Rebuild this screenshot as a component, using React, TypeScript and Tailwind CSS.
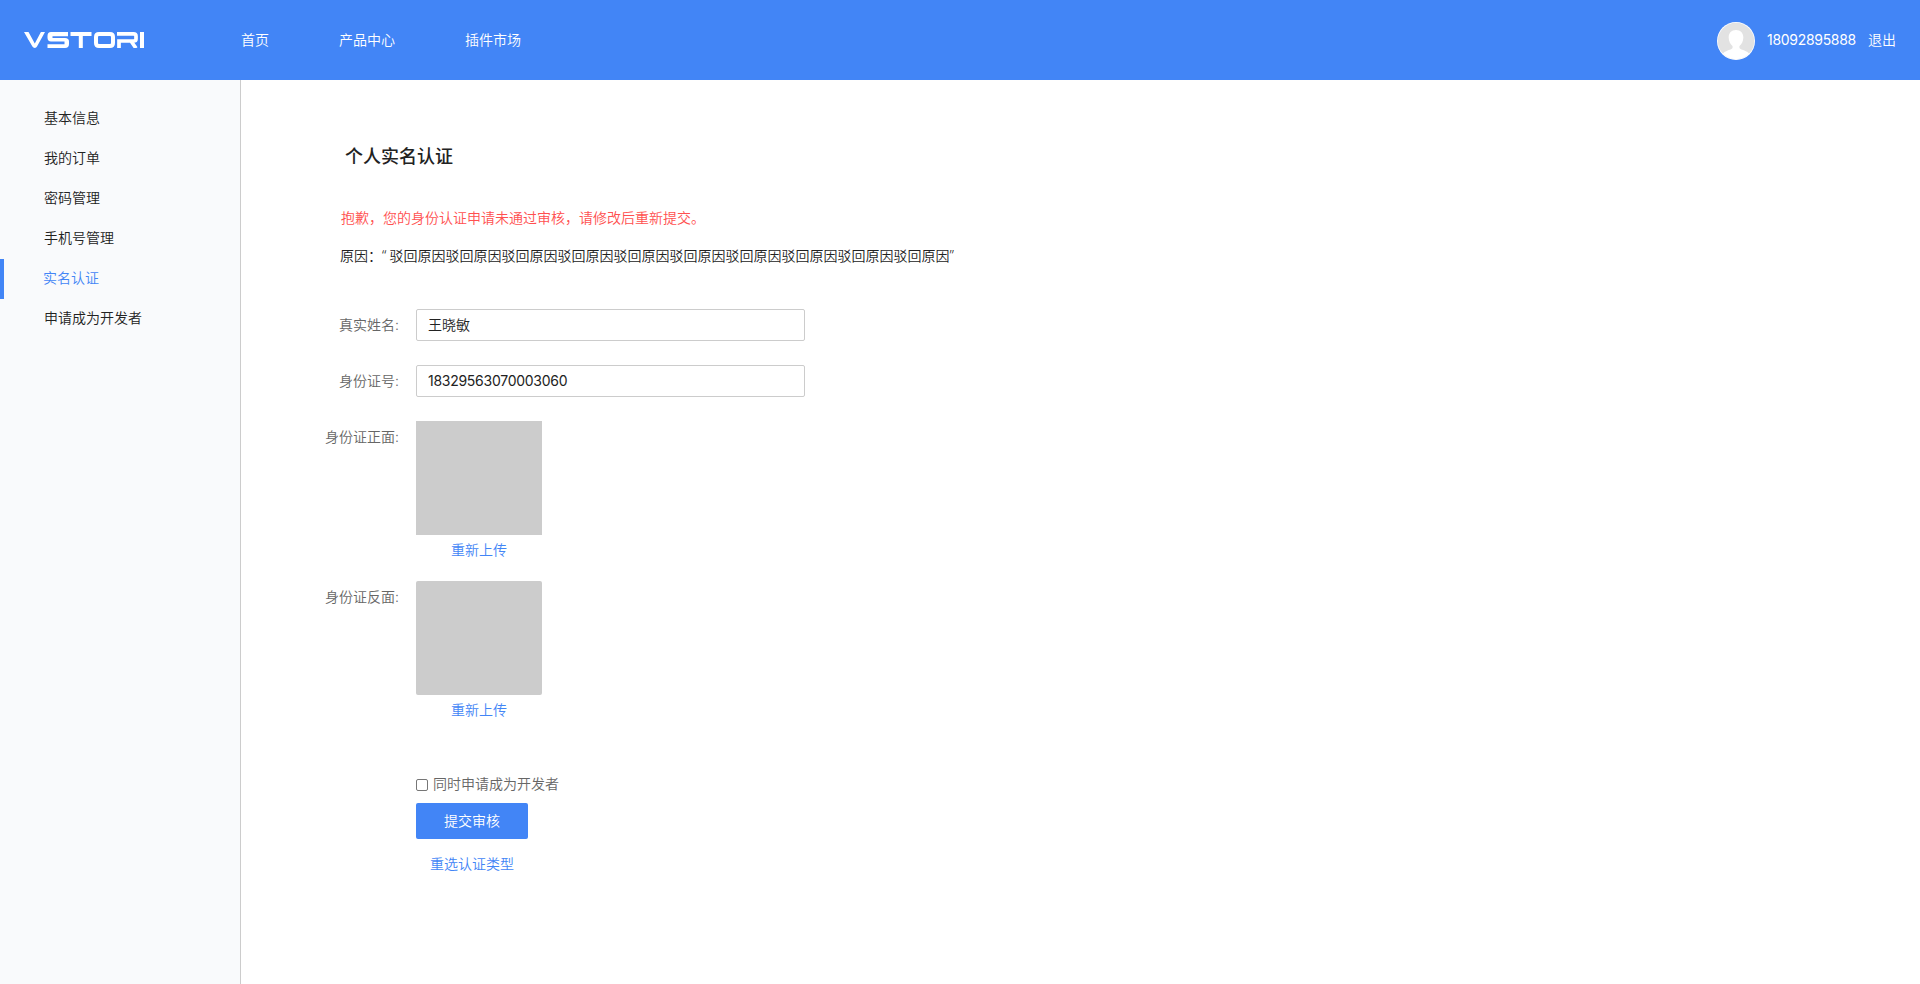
import React from 'react';

const navItems = ['首页', '产品中心', '插件市场'];
const menu = ['基本信息', '我的订单', '密码管理', '手机号管理', '实名认证', '申请成为开发者'];
const active = '实名认证';

function Logo() {
  return (
    <svg width="120" height="16" viewBox="0 0 120 16" fill="none" stroke="#fff" strokeWidth="4" aria-label="VSTORI">
      <path d="M0 0H4.500L10.800 11.500L16.900 0H21L13 14.6Q12.3 16 10.800 16Q9.200 16 8.4 14.6Z" fill="#fff" stroke="none" />
      <path
        d="M27 0H44V4.200H28.500V6H41Q45 6 45 9.500V12Q45 16 41 16H23.500V12.300H40.500V9.400H27Q23.500 9.400 23.500 5.800V4Q23.500 0 27 0Z"
        fill="#fff"
        stroke="none"
      />
      <path d="M46.500 2H67.500M56.800 2V16" />
      <path d="M75 2H86Q89 2 89 5V11Q89 14 86 14H75Q72 14 72 11V5Q72 2 75 2Z" />
      <path d="M93 1.900H109.500Q112 1.900 112 4V7Q112 9 109.500 9H95V16M107 9L112 16.200" strokeWidth="3.700" />
      <path d="M118 0V16" />
    </svg>
  );
}

function Avatar() {
  return (
    <svg className="mt-0.5 shrink-0" width="38" height="38" viewBox="0 0 38 38">
      <defs>
        <clipPath id="face">
          <circle cx="19" cy="19" r="18.2" />
        </clipPath>
      </defs>
      <circle cx="19" cy="19" r="19" fill="#fff" />
      <g clipPath="url(#face)">
        <rect width="38" height="38" fill="#e2e2e2" />
        <path
          d="M19 8c-4.800 0-7.600 3.400-7.300 8 .2 3.600 1.700 6.200 3.800 8 .4 2-.2 3-2 3.600C10 28.800 8 29.500 6 31.500v8h26v-8c-2-2-4-2.700-7.500-3.900-1.800-.6-2.400-1.600-2-3.600 2.100-1.800 3.600-4.400 3.800-8 .3-4.600-2.500-8-7.300-8Z"
          fill="#fff"
        />
      </g>
    </svg>
  );
}

function Row({ label, className, children }: { label: string; className: string; children: React.ReactNode }) {
  return (
    <div className={`flex items-start ${className}`}>
      <label className="mr-[17px] w-[158px] shrink-0 text-right leading-8 text-[#666]">{label}</label>
      {children}
    </div>
  );
}

function Upload({ className }: { className: string }) {
  return (
    <div className="w-[126px] text-center">
      <div className={`h-[114px] bg-[#ccc] ${className}`} />
      <a className="block leading-[30px] text-[#4285f6]">重新上传</a>
    </div>
  );
}

const inputClass =
  'h-8 w-[389px] rounded-xs border border-[#ccc] bg-white px-[11px] pb-0.5 text-[#222] outline-none';

export default function App() {
  return (
    <div className="flex h-[984px] flex-col bg-white font-['Inter','Noto_Sans_CJK_SC',sans-serif] text-sm font-[350] text-[#222]">
      <header className="flex h-20 shrink-0 items-center bg-[#4285f6] px-6 text-white">
        <Logo />
        <nav className="ml-[97px] flex gap-[70px]">
          {navItems.map((item) => (
            <a key={item}>{item}</a>
          ))}
        </nav>
        <div className="ml-auto flex items-center">
          <Avatar />
          <span className="ml-3 w-[90px] font-normal tracking-[-0.3px] whitespace-nowrap">18092895888</span>
          <a className="ml-[11px]">退出</a>
        </div>
      </header>
      <div className="flex flex-1">
        <aside className="w-[241px] shrink-0 border-r border-[#ccc] bg-[#f9fafc] pt-[19px]">
          {menu.map((item) => (
            <a
              key={item}
              className={
                item === active
                  ? 'block h-10 border-l-4 border-[#4285f6] pl-[39px] leading-[38px] text-[#4285f6]'
                  : 'block h-10 pl-11 leading-[38px]'
              }
            >
              {item}
            </a>
          ))}
        </aside>
        <main className="flex-1">
          <h1 className="mt-[62px] ml-[104px] text-lg leading-[30px] font-medium">个人实名认证</h1>
          <p className="mt-[36px] ml-[100px] leading-[20px] text-[#ff5050]">
            抱歉，您的身份认证申请未通过审核，请修改后重新提交。
          </p>
          <p className="mt-[18px] ml-[99px] flex leading-[20px]">
            <span>原因：</span>
            <span className="w-[7.5px] font-['Noto_Sans',sans-serif]">“</span>
            <span>驳回原因驳回原因驳回原因驳回原因驳回原因驳回原因驳回原因驳回原因驳回原因驳回原因</span>
            <span className="font-['Noto_Sans',sans-serif]">”</span>
          </p>
          <Row label="真实姓名:" className="mt-[43px]">
            <input className={inputClass} defaultValue="王晓敏" />
          </Row>
          <Row label="身份证号:" className="mt-6">
            <input className={`${inputClass} font-normal tracking-[-0.27px]`} defaultValue="18329563070003060" />
          </Row>
          <Row label="身份证正面:" className="mt-6">
            <Upload className="rounded-none" />
          </Row>
          <Row label="身份证反面:" className="mt-4">
            <Upload className="rounded-xs" />
          </Row>
          <div className="mt-[45px] ml-[175px] flex flex-col items-start">
            <label className="flex h-7 items-center leading-7 text-[#666]">
              <input
                type="checkbox"
                className="mt-0.5 mr-[5px] size-3 appearance-none rounded-xs border border-[#767676] bg-white"
              />
              同时申请成为开发者
            </label>
            <button className="mt-[5px] h-9 w-28 rounded-xs bg-[#4285f6] text-white">提交审核</button>
            <a className="mt-[15px] ml-3.5 leading-5 text-[#4285f6]">重选认证类型</a>
          </div>
        </main>
      </div>
    </div>
  );
}
